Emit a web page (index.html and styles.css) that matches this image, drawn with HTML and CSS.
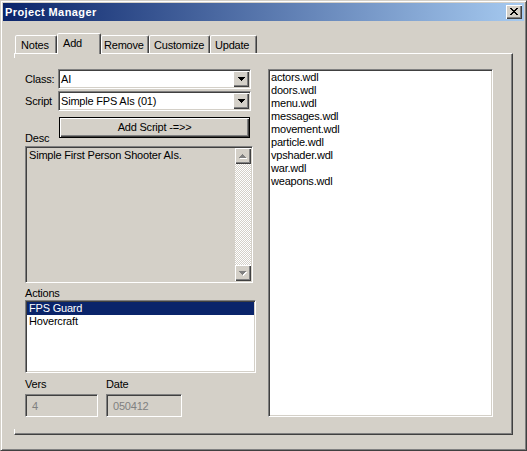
FILE: index.html
```html
<!DOCTYPE html>
<html lang="en">
<head>
<meta charset="utf-8">
<title>Project Manager</title>
<link rel="stylesheet" href="styles.css">
</head>
<body>
<div class="window">
  <div class="titlebar">
    <span class="title">Project Manager</span>
    <button class="close" type="button" aria-label="Close">
      <svg width="8" height="7" viewBox="0 0 8 7" shape-rendering="crispEdges">
        <path fill="#000" d="M0 0h2v1H0zM6 0h2v1H6zM1 1h2v1H1zM5 1h2v1H5zM2 2h4v1H2zM3 3h2v1H3zM2 4h4v1H2zM1 5h2v1H1zM5 5h2v1H5zM0 6h2v1H0zM6 6h2v1H6z"/>
      </svg>
    </button>
  </div>

  <div class="client">
    <div class="tabs">
      <div class="tab tab-notes">Notes</div>
      <div class="tab tab-add active">Add</div>
      <div class="tab tab-remove">Remove</div>
      <div class="tab tab-customize">Customize</div>
      <div class="tab tab-update">Update</div>
    </div>

    <div class="panel">
      <div class="page">
        <div class="left">
          <div class="row row-class">
            <span class="label">Class:</span>
            <div class="combo sunken">
              <span class="combo-text">AI</span>
              <span class="arrow-btn">
                <svg width="7" height="4" viewBox="0 0 7 4" shape-rendering="crispEdges"><path fill="#000" d="M0 0h7v1H0zM1 1h5v1H1zM2 2h3v1H2zM3 3h1v1H3z"/></svg>
              </span>
            </div>
          </div>

          <div class="row row-script">
            <span class="label">Script</span>
            <div class="combo sunken">
              <span class="combo-text">Simple FPS AIs (01)</span>
              <span class="arrow-btn">
                <svg width="7" height="4" viewBox="0 0 7 4" shape-rendering="crispEdges"><path fill="#000" d="M0 0h7v1H0zM1 1h5v1H1zM2 2h3v1H2zM3 3h1v1H3z"/></svg>
              </span>
            </div>
          </div>

          <div class="row row-add">
            <span class="label desc-label">Desc</span>
            <button class="btn btn-default" type="button">Add Script -=&gt;&gt;</button>
          </div>

          <div class="desc sunken">
            <div class="desc-text">Simple First Person Shooter AIs.</div>
            <div class="vscroll">
              <span class="arrow-btn">
                <svg width="8" height="5" viewBox="0 0 8 5" shape-rendering="crispEdges">
                  <path fill="#fff" d="M4 1h1v1H4zM3 2h3v1H3zM2 3h5v1H2zM1 4h7v1H1z"/>
                  <path fill="#808080" d="M3 0h1v1H3zM2 1h3v1H2zM1 2h5v1H1zM0 3h7v1H0z"/>
                </svg>
              </span>
              <span class="track"></span>
              <span class="arrow-btn">
                <svg width="8" height="5" viewBox="0 0 8 5" shape-rendering="crispEdges">
                  <path fill="#fff" d="M1 1h7v1H1zM2 2h5v1H2zM3 3h3v1H3zM4 4h1v1H4z"/>
                  <path fill="#808080" d="M0 0h7v1H0zM1 1h5v1H1zM2 2h3v1H2zM3 3h1v1H3z"/>
                </svg>
              </span>
            </div>
          </div>

          <div class="label actions-label">Actions</div>
          <ul class="list actions sunken">
            <li class="selected">FPS Guard</li>
            <li>Hovercraft</li>
          </ul>

          <div class="meta">
            <div class="field field-vers">
              <span class="label">Vers</span>
              <div class="edit sunken">4</div>
            </div>
            <div class="field field-date">
              <span class="label">Date</span>
              <div class="edit sunken">050412</div>
            </div>
          </div>
        </div>

        <ul class="list files sunken">
          <li>actors.wdl</li>
          <li>doors.wdl</li>
          <li>menu.wdl</li>
          <li>messages.wdl</li>
          <li>movement.wdl</li>
          <li>particle.wdl</li>
          <li>vpshader.wdl</li>
          <li>war.wdl</li>
          <li>weapons.wdl</li>
        </ul>
      </div>
    </div>
  </div>
</div>
</body>
</html>
```

FILE: styles.css
```css
/* Classic 3D dialog palette */
html, body {
  margin: 0;
  padding: 0;
  background: #d4d0c8;
}

.window {
  box-sizing: border-box;
  width: 527px;
  height: 451px;
  background: #d4d0c8;
  border: 1px solid;
  border-color: #d4d0c8 #404040 #404040 #d4d0c8;
  box-shadow: inset 1px 1px #fff, inset -1px -1px #808080;
  padding: 2px;
  display: flex;
  flex-direction: column;
  font: 11px/13px "Liberation Sans", Arial, sans-serif;
  letter-spacing: -0.2px;
  color: #000;
}

/* Caption */
.titlebar {
  flex: none;
  height: 18px;
  display: flex;
  align-items: center;
  justify-content: space-between;
  padding: 0 2px;
  background: linear-gradient(to right, #0a246a, #a6caf0);
  color: #fff;
}

.title {
  font-weight: bold;
  letter-spacing: 0.4px;
}

.close {
  box-sizing: border-box;
  width: 16px;
  height: 14px;
  border: 0;
  padding: 0 0 1px 0;
  margin: 0;
  background: #d4d0c8;
  box-shadow: inset 1px 1px #fff, inset -1px -1px #404040, inset -2px -2px #808080;
  display: flex;
  align-items: center;
  justify-content: center;
}

.close svg {
  display: block;
}

/* Client area */
.client {
  flex: 1;
  padding: 12px 11px 0 11px;
}

.tabs {
  position: relative;
  z-index: 1;
  display: flex;
  align-items: flex-end;
  height: 20px;
  margin-left: 1px;
}

.tab {
  box-sizing: border-box;
  height: 18px;
  padding: 3px 0 0 5px;
  border: 1px solid;
  border-bottom: 0;
  border-color: #fff #404040 transparent #fff;
  border-radius: 2px 2px 0 0;
  box-shadow: inset -1px 0 #808080;
  background: #d4d0c8;
  white-space: nowrap;
}

.tab.active {
  height: 21px;
  margin-bottom: -1px;
}

.tab-notes { width: 42px; }
.tab-add { width: 44px; }
.tab-remove { width: 48px; padding-left: 2px; }
.tab-customize { width: 61px; padding-left: 4px; }
.tab-update { width: 47px; padding-left: 4px; }

.panel {
  box-sizing: border-box;
  height: 382px;
  border: 1px solid;
  border-color: #fff #404040 #404040 #fff;
  box-shadow: inset -1px -1px #808080;
  padding: 4px 0 5px 0;
}

/* The property page sits over the panel's left edge */
.page {
  box-sizing: border-box;
  height: 100%;
  margin: 0 1px 0 -1px;
  padding: 11px 0 0 11px;
  background: #d4d0c8;
  display: grid;
  grid-template-columns: 231px 225px;
  column-gap: 12px;
  align-items: start;
}

.left {
  display: flex;
  flex-direction: column;
  align-items: flex-start;
}

/* Bevels */
.sunken {
  box-sizing: border-box;
  border: 1px solid;
  border-color: #808080 #fff #fff #808080;
  box-shadow: inset 1px 1px #404040, inset -1px -1px #d4d0c8;
}

.arrow-btn {
  box-sizing: border-box;
  flex: none;
  width: 16px;
  height: 16px;
  background: #d4d0c8;
  box-shadow: inset 1px 1px #fff, inset -1px -1px #404040, inset -2px -2px #808080;
  display: flex;
  align-items: center;
  justify-content: center;
}

.arrow-btn svg {
  display: block;
}

/* Rows with a label and a combo box */
.row {
  display: flex;
  align-items: center;
  height: 20px;
}

.row .label {
  width: 33px;
  flex: none;
}

.row-script {
  margin-top: 2px;
}

.combo {
  width: 193px;
  height: 20px;
  padding: 1px;
  background: #fff;
  display: flex;
  align-items: center;
  justify-content: space-between;
}

.combo-text {
  padding-left: 1px;
}

.row-add {
  margin-top: 6px;
  height: 21px;
  align-items: stretch;
}

.row-add .desc-label {
  width: 34px;
  align-self: flex-end;
  margin-bottom: -7px;
}

.btn {
  box-sizing: border-box;
  width: 191px;
  height: 21px;
  margin: 0;
  padding: 0;
  font: inherit;
  letter-spacing: inherit;
  color: #000;
  background: #d4d0c8;
  text-align: center;
}

.btn-default {
  border: 1px solid #000;
  box-shadow: inset 1px 1px #fff, inset -1px -1px #404040, inset -2px -2px #808080;
}

/* Read-only description */
.desc {
  margin-top: 8px;
  width: 228px;
  height: 137px;
  padding: 1px;
  background: #d4d0c8;
  display: flex;
}

.desc-text {
  flex: 1;
  padding: 1px 0 0 2px;
}

.vscroll {
  width: 16px;
  display: flex;
  flex-direction: column;
}

.track {
  flex: 1;
  background: repeating-conic-gradient(#fff 0 25%, #d4d0c8 0 50%) 0 0 / 2px 2px;
}

.actions-label {
  margin-top: 4px;
}

/* List boxes */
.list {
  margin: 0;
  padding: 1px;
  list-style: none;
  background: #fff;
}

.list li {
  height: 13px;
  padding-left: 2px;
  white-space: nowrap;
}

.list li.selected {
  background: #0a246a;
  color: #fff;
}

.actions {
  width: 231px;
  height: 73px;
}

.files {
  width: 225px;
  height: 348px;
}

.files li {
  padding-left: 1px;
}

/* Version and date fields */
.meta {
  margin-top: 5px;
  display: flex;
  gap: 8px;
}

.field {
  display: flex;
  flex-direction: column;
}

.field .edit {
  margin-top: 3px;
  height: 23px;
  padding: 1px 0 0 6px;
  display: flex;
  align-items: center;
  color: #808080;
  background: #d4d0c8;
}

.field-vers .edit { width: 73px; }
.field-date .edit { width: 76px; }
```
